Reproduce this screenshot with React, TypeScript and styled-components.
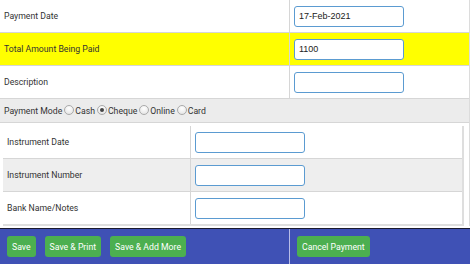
import styled, { createGlobalStyle } from 'styled-components';

const GlobalStyle = createGlobalStyle`
  body {
    margin: 0;
    font-family: Roboto, "Liberation Sans", sans-serif;
    color: #333;
    background: #fff;
  }
`;

const Page = styled.div`
  width: 470px;
  height: 264px;
  overflow: hidden;
`;

const Table = styled.div`
  border-right: 1px solid #dcdcdc;
`;

interface RowProps {
  highlight?: boolean;
}
const Row = styled.div<RowProps>`
  display: flex;
  height: 32px;
  border-bottom: 1px solid #d6d6d6;
  background: ${(props) => (props.highlight ? '#ffff00' : '#fff')};
`;

const Label = styled.div`
  width: 290px;
  flex-shrink: 0;
  display: flex;
  align-items: center;
  padding-left: 4px;
  box-sizing: border-box;
  border-right: 1px solid #d6d6d6;
  font-size: 8.7px;
`;

const Value = styled.div`
  flex: 1;
  display: flex;
  align-items: center;
  padding-left: 4px;
`;

const Input = styled.div`
  width: 110px;
  height: 21px;
  box-sizing: border-box;
  border: 1px solid #5b9bd1;
  border-radius: 3px;
  background: #fff;
  display: flex;
  align-items: center;
  padding-left: 4px;
  font-size: 9px;
  color: #222;
  font-family: "Liberation Sans", Arial, sans-serif;
`;

const ModeRow = styled.div`
  display: flex;
  align-items: center;
  height: 23px;
  padding-left: 4px;
  background: #ececec;
  border-bottom: 1px solid #d6d6d6;
  font-size: 8.7px;
`;

const ModeOption = styled.label`
  display: flex;
  align-items: center;
  margin-left: 2px;
  gap: 1px;
`;

interface RadioProps {
  checked?: boolean;
}
const Radio = styled.span<RadioProps>`
  width: 8px;
  height: 8px;
  border-radius: 50%;
  border: 1px solid #aaa;
  background: radial-gradient(circle at 50% 30%, #fff, #e0e0e0);
  display: inline-flex;
  align-items: center;
  justify-content: center;
  margin-bottom: 2px;
  &::after {
    content: '';
    display: ${(props) => (props.checked ? 'block' : 'none')};
    width: 4px;
    height: 4px;
    border-radius: 50%;
    background: #444;
  }
`;

const NestedWrap = styled.div`
  padding: 3px 5px 0 3px;
`;

const Nested = styled.div`
  border-right: 2px solid #dedede;
  border-bottom: 2px solid #dedede;
`;

interface NestedRowProps {
  shaded?: boolean;
}
const NestedRow = styled.div<NestedRowProps>`
  display: flex;
  height: 32px;
  border-bottom: 1px solid #d6d6d6;
  background: ${(props) => (props.shaded ? '#eeeeee' : '#fff')};
  &:last-child {
    border-bottom: none;
  }
`;

const NestedLabel = styled.div`
  width: 188px;
  flex-shrink: 0;
  display: flex;
  align-items: center;
  padding-left: 4px;
  box-sizing: border-box;
  border-right: 1px solid #d6d6d6;
  font-size: 8.7px;
`;

const Footer = styled.div`
  margin-top: 2px;
  display: flex;
  height: 35px;
  background: #3f51b5;
  border-top: 1px solid #1a1a2e;
`;

const FooterLeft = styled.div`
  width: 290px;
  flex-shrink: 0;
  display: flex;
  align-items: center;
  gap: 9px;
  padding-left: 7px;
  box-sizing: border-box;
  border-right: 1px solid #b8bde8;
`;

const FooterRight = styled.div`
  flex: 1;
  display: flex;
  align-items: center;
  padding-left: 7px;
`;

const Button = styled.button`
  height: 21px;
  padding: 0 5px;
  border: none;
  border-radius: 3px;
  background: #4caf50;
  color: #fff;
  font-family: Roboto, "Liberation Sans", sans-serif;
  font-size: 8.7px;
  cursor: pointer;
`;

export default function App() {
  return (
    <Page>
      <GlobalStyle />
      <Table>
        <Row>
          <Label>Payment Date</Label>
          <Value>
            <Input>17-Feb-2021</Input>
          </Value>
        </Row>
        <Row highlight>
          <Label>Total Amount Being Paid</Label>
          <Value>
            <Input>1100</Input>
          </Value>
        </Row>
        <Row>
          <Label>Description</Label>
          <Value>
            <Input />
          </Value>
        </Row>
        <ModeRow>
          Payment Mode
          <ModeOption>
            <Radio />
            Cash
          </ModeOption>
          <ModeOption>
            <Radio checked />
            Cheque
          </ModeOption>
          <ModeOption>
            <Radio />
            Online
          </ModeOption>
          <ModeOption>
            <Radio />
            Card
          </ModeOption>
        </ModeRow>
        <NestedWrap>
          <Nested>
            <NestedRow>
              <NestedLabel>Instrument Date</NestedLabel>
              <Value>
                <Input />
              </Value>
            </NestedRow>
            <NestedRow shaded>
              <NestedLabel>Instrument Number</NestedLabel>
              <Value>
                <Input />
              </Value>
            </NestedRow>
            <NestedRow>
              <NestedLabel>Bank Name/Notes</NestedLabel>
              <Value>
                <Input />
              </Value>
            </NestedRow>
          </Nested>
        </NestedWrap>
      </Table>
      <Footer>
        <FooterLeft>
          <Button>Save</Button>
          <Button>Save &amp; Print</Button>
          <Button>Save &amp; Add More</Button>
        </FooterLeft>
        <FooterRight>
          <Button>Cancel Payment</Button>
        </FooterRight>
      </Footer>
    </Page>
  );
}
